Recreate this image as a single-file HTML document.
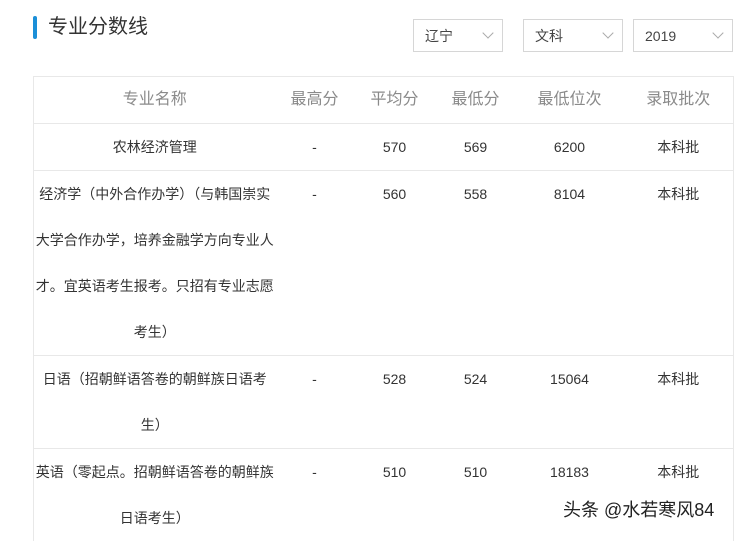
<!DOCTYPE html>
<html><head><meta charset="utf-8"><style>
body{margin:0;width:738px;height:533px;overflow:hidden;background:#fff;font-family:"Liberation Sans","Noto Sans CJK SC",sans-serif;color:#333;position:relative}
.bar{position:absolute;left:33px;top:16px;width:4px;height:23px;background:#1b8fd8;border-radius:2px}
.title{position:absolute;left:48px;top:13px;font-size:20px;line-height:28px;color:#333}
.sel{position:absolute;top:19px;height:31px;border:1px solid #d6d6d6;font-size:14px;line-height:33px;color:#444;box-sizing:content-box}
.sel span{position:absolute;left:11px}
.sel i{position:absolute;right:10px;top:9px;width:7px;height:7px;border-right:1px solid #aaa;border-bottom:1px solid #aaa;transform:rotate(45deg)}
table{position:absolute;left:33px;top:76px;border-collapse:collapse;width:700px;table-layout:fixed}
td,th{border-top:1px solid #e8e8e8;text-align:center;font-size:14px;line-height:46px;padding:0;vertical-align:top;font-weight:normal;color:#333}
th{font-size:16px;color:#8a8a8a;height:46px}
tr>*:first-child{border-left:1px solid #e8e8e8}
tr>*:last-child{border-right:1px solid #e8e8e8}
.wm{position:absolute;left:563px;top:496px;font-size:18px;color:#222;text-shadow:0 0 2px #fff,0 0 2px #fff}
</style></head><body>
<div class="bar"></div><div class="title">专业分数线</div>
<div class="sel" style="left:413px;width:88px"><span>辽宁</span><i></i></div>
<div class="sel" style="left:523px;width:98px"><span>文科</span><i></i></div>
<div class="sel" style="left:633px;width:98px"><span>2019</span><i></i></div>
<table>
<colgroup><col style="width:242px"><col style="width:78px"><col style="width:82px"><col style="width:80px"><col style="width:108px"><col style="width:110px"></colgroup>
<tr><th>专业名称</th><th>最高分</th><th>平均分</th><th>最低分</th><th>最低位次</th><th>录取批次</th></tr>
<tr><td>农林经济管理</td><td>-</td><td>570</td><td>569</td><td>6200</td><td>本科批</td></tr>
<tr><td>经济学（中外合作办学）（与韩国崇实大学合作办学，培养金融学方向专业人才。宜英语考生报考。只招有专业志愿考生）</td><td>-</td><td>560</td><td>558</td><td>8104</td><td>本科批</td></tr>
<tr><td>日语（招朝鲜语答卷的朝鲜族日语考生）</td><td>-</td><td>528</td><td>524</td><td>15064</td><td>本科批</td></tr>
<tr><td>英语（零起点。招朝鲜语答卷的朝鲜族日语考生）</td><td>-</td><td>510</td><td>510</td><td>18183</td><td>本科批</td></tr>
</table>
<div class="wm">头条 @水若寒风84</div>
</body></html>
